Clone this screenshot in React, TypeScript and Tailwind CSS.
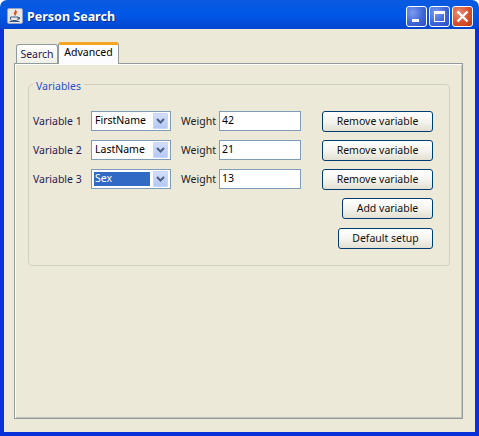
import React from 'react';

const ui = "font-['Noto_Sans',sans-serif]";

const JavaIcon = () => (
  <svg width="16" height="16" viewBox="0 0 16 16">
    <rect x="0.5" y="0.5" width="15" height="15" rx="1.5" fill="#e8e8e8" stroke="#9aa4c0" />
    <path d="M8.5 2c1 1.5-2 2.5-1 4 .4.6 1 1 .8 1.7M10 3.5c-1.5 1-2 1.700-1 3.200" fill="none" stroke="#d8541c" strokeWidth="1.200" />
    <path d="M3.500 9h7.500v2.300c0 1-1 1.200-2 1.200H5.500c-1 0-2-.2-2-1.200z" fill="none" stroke="#3c5a80" />
    <path d="M11 9.500h1.500v1.500H11M2.500 13.500h10" fill="none" stroke="#3c5a80" />
  </svg>
);

const WinButton = ({ kind }: { kind: 'min' | 'max' | 'close' }) => (
  <div
    className={`w-[21px] h-[21px] rounded-[3px] border border-white flex items-center justify-center ${
      kind === 'close'
        ? 'bg-[radial-gradient(circle_at_30%_30%,#e8907a,#d9502c_55%,#c03a14)]'
        : 'bg-[radial-gradient(circle_at_30%_30%,#7d9cf0,#3f66d8_55%,#2a4cc4)]'
    }`}
  >
    {kind === 'min' && <div className="w-[7px] h-[3px] bg-white mt-[9px] mr-[3px]" />}
    {kind === 'max' && (
      <div className="w-[11px] h-[11px] border border-white border-t-[3px]" />
    )}
    {kind === 'close' && (
      <svg width="13" height="13" viewBox="0 0 13 13">
        <path d="M1.500 1.500l10 10M11.500 1.500l-10 10" stroke="#fff" strokeWidth="2.400" />
      </svg>
    )}
  </div>
);

const Combo = ({ value, selected }: { value: string; selected?: boolean }) => (
  <div className="w-[80px] h-[20px] border border-[#7f9db9] bg-white flex items-center pl-[2px] pr-[2px] shrink-0">
    <div
      className={`w-[58px] h-[14px] leading-[13px] pl-[1px] ${
        selected ? 'bg-[#316ac5] text-white' : 'text-black'
      }`}
    >
      {value}
    </div>
    <div className="w-[15px] h-[16px] ml-[3px] rounded-[1px] border border-[#c6d5f8] bg-gradient-to-b from-[#d3defb] to-[#b5c8f4] flex items-center justify-center">
      <svg width="9" height="6" viewBox="0 0 9 6">
        <path d="M1 1l3.500 3.500L8 1" fill="none" stroke="#4d6185" strokeWidth="2" />
      </svg>
    </div>
  </div>
);

const Button = ({ label, width }: { label: string; width: string }) => (
  <button
    className={`${width} h-[21px] rounded-[3px] border border-[#003c74] bg-gradient-to-b from-white via-[#f5f4ee] to-[#e3e0d2] text-[#111] text-center leading-[17px]`}
  >
    {label}
  </button>
);

const Row = ({ name, field, weight, selected }: { name: string; field: string; weight: string; selected?: boolean }) => (
  <div className="flex items-center h-[20px]">
    <span className="w-[58px] shrink-0 text-[#2a1a50] leading-[18px] pb-[1px]">{name}</span>
    <Combo value={field} selected={selected} />
    <span className="w-[38px] ml-[10px] shrink-0 text-[#222] leading-[18px] pb-[1px]">Weight</span>
    <div className="w-[82px] h-[20px] border border-[#7f9db9] bg-white pl-[2px] leading-[17px] shrink-0">{weight}</div>
    <div className="ml-[21px]">
      <Button label="Remove variable" width="w-[111px]" />
    </div>
  </div>
);

export default function App() {
  return (
    <div className={`w-[479px] h-[436px] bg-white flex flex-col text-[10.5px] ${ui}`}>
      {/* title bar */}
      <div className="h-[29px] shrink-0 rounded-t-[7px] bg-gradient-to-b from-[#0a5ae0] via-[#0058e6] to-[#0344d0] flex items-center pl-[7px] pr-[6px] pt-[3px]">
        <JavaIcon />
        <span className="ml-[4px] text-white font-bold text-[12.5px] leading-[18px] pt-[1px] [text-shadow:1px_1px_0_#0a2a90]">
          Person Search
        </span>
        <div className="ml-auto flex gap-[2px]">
          <WinButton kind="min" />
          <WinButton kind="max" />
          <WinButton kind="close" />
        </div>
      </div>

      {/* window body */}
      <div className="flex-1 flex flex-col bg-[#ece9d8] border-x-[4px] border-b-[4px] border-[#0831d9] px-[10px] pt-[13px]">
        <div className="flex items-end h-[22px] pl-[2px] relative z-10 -mb-[1px]">
          <div className="w-[42px] h-[19px] mb-[1px] bg-gradient-to-b from-white to-[#f0efe6] border border-b-0 border-[#919b9c] rounded-t-[3px] text-center leading-[18px] text-[#2a1a50]">
            Search
          </div>
          <div className="w-[61px] h-[22px] bg-[#fcfcfe] border-x border-[#919b9c] border-t-[3px] border-t-[#f5a623] rounded-t-[3px] text-center leading-[15px] text-black">
            Advanced
          </div>
        </div>
        <div className="w-[449px] h-[356px] border border-[#919b9c] bg-[#ece9d8] pt-[20px] pl-[13px] shadow-[inset_1px_1px_0_#fff,inset_-1px_-1px_0_#c4c6bc]">
          <div className="relative w-[422px] h-[182px] border border-[#d0d0bf] rounded-[4px] pt-[26px] pl-[4px]">
            <span className="absolute -top-[5px] left-[4px] px-[3px] bg-[#ece9d8] text-[#2a4fd0] leading-[13px]">
              Variables
            </span>
            <div className="flex flex-col gap-[9px]">
              <Row name="Variable 1" field="FirstName" weight="42" />
              <Row name="Variable 2" field="LastName" weight="21" />
              <Row name="Variable 3" field="Sex" weight="13" selected />
              <div className="flex justify-end w-[400px]">
                <Button label="Add variable" width="w-[91px]" />
              </div>
              <div className="flex justify-end w-[400px]">
                <Button label="Default setup" width="w-[95px]" />
              </div>
            </div>
          </div>
        </div>
      </div>
    </div>
  );
}
